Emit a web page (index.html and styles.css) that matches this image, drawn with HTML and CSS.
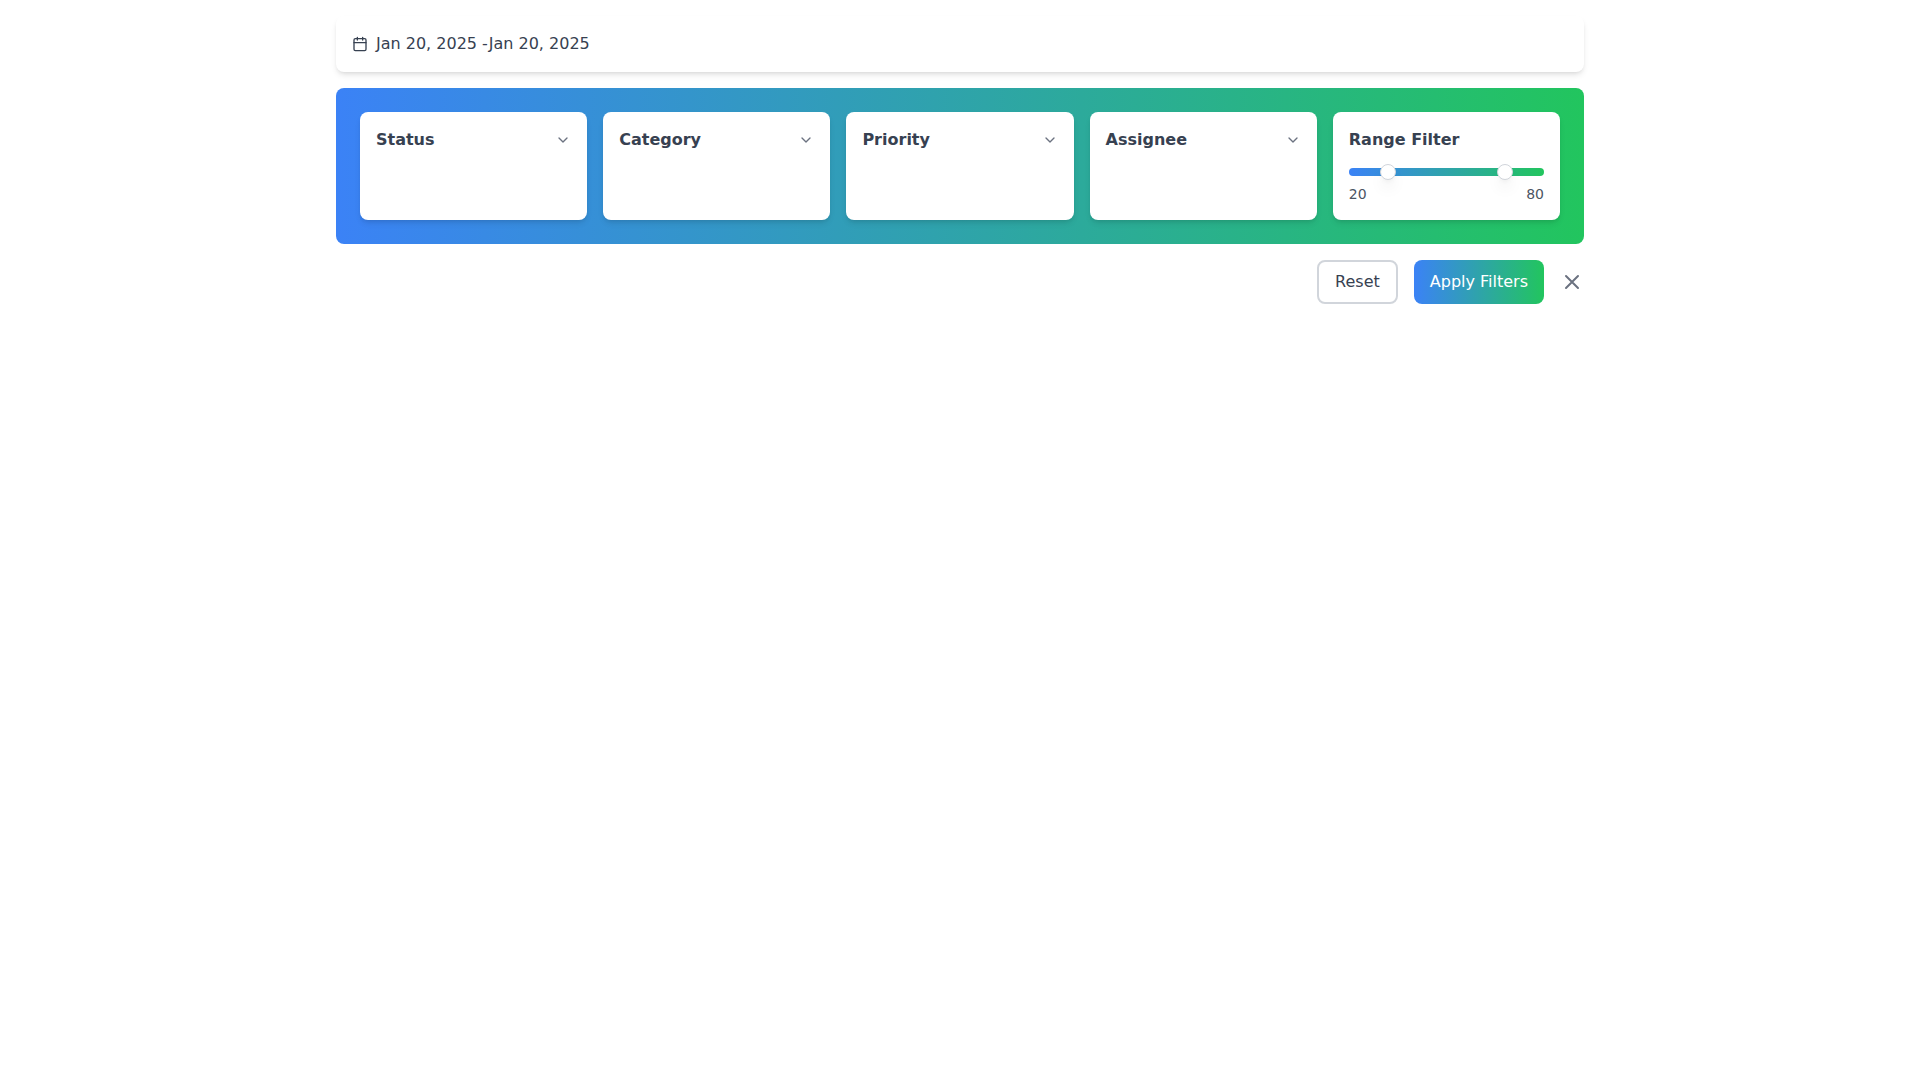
FILE: index.html
```html
<!DOCTYPE html>
<html lang="en">
<head>
<meta charset="utf-8">
<meta name="viewport" content="width=device-width, initial-scale=1">
<title>Filters</title>
<link rel="stylesheet" href="styles.css">
</head>
<body>
<main class="filters">
  <button type="button" class="date-range">
    <svg class="icon-small" viewBox="0 0 24 24" aria-hidden="true"><path d="M8 2v4M16 2v4M3 10h18"/><rect x="3" y="4" width="18" height="18" rx="2"/></svg>
    <span>Jan 20, 2025 -Jan 20, 2025</span>
  </button>
  <div class="panel">
    <section class="card">
      <button type="button" class="card-toggle">Status <svg class="icon-small chevron" viewBox="0 0 24 24" aria-hidden="true"><path d="m6 9 6 6 6-6"/></svg></button>
    </section>
    <section class="card">
      <button type="button" class="card-toggle">Category <svg class="icon-small chevron" viewBox="0 0 24 24" aria-hidden="true"><path d="m6 9 6 6 6-6"/></svg></button>
    </section>
    <section class="card">
      <button type="button" class="card-toggle">Priority <svg class="icon-small chevron" viewBox="0 0 24 24" aria-hidden="true"><path d="m6 9 6 6 6-6"/></svg></button>
    </section>
    <section class="card">
      <button type="button" class="card-toggle">Assignee <svg class="icon-small chevron" viewBox="0 0 24 24" aria-hidden="true"><path d="m6 9 6 6 6-6"/></svg></button>
    </section>
    <section class="card">
      <h2 class="card-title">Range Filter</h2>
      <div class="range">
        <input class="range-input" type="range" min="0" max="100" value="20" aria-label="Minimum">
        <input class="range-input" type="range" min="0" max="100" value="80" aria-label="Maximum">
      </div>
      <div class="range-values"><span>20</span><span>80</span></div>
    </section>
  </div>
  <div class="actions">
    <button type="button" class="button button-reset">Reset</button>
    <button type="button" class="button button-apply">Apply Filters</button>
    <button type="button" class="close" aria-label="Close"><svg class="icon" viewBox="0 0 24 24" aria-hidden="true"><path d="M18 6 6 18M6 6l12 12"/></svg></button>
  </div>
</main>
</body>
</html>
```
FILE: styles.css
```css
*, *::before, *::after { box-sizing: border-box; }

body {
  margin: 0;
  background: #fff;
  color: #374151;
  font: 16px/24px "DejaVu Sans", sans-serif;
}

button {
  margin: 0;
  padding: 0;
  border: 0;
  background: none;
  color: inherit;
  font: inherit;
  cursor: pointer;
}

svg {
  display: block;
  fill: none;
  stroke: currentColor;
  stroke-width: 2;
  stroke-linecap: round;
  stroke-linejoin: round;
}

.icon { width: 24px; height: 24px; }
.icon-small { width: 16px; height: 16px; }

.filters {
  display: flex;
  flex-direction: column;
  gap: 16px;
  max-width: 1280px;
  margin: 0 auto;
  padding: 16px;
}

.date-range {
  display: flex;
  align-items: center;
  gap: 8px;
  padding: 16px;
  border-radius: 8px;
  background: #fff;
  box-shadow: 0 4px 6px -1px rgb(0 0 0 / 0.1), 0 2px 4px -2px rgb(0 0 0 / 0.1);
}

.panel {
  display: grid;
  grid-template-columns: repeat(5, 1fr);
  gap: 16px;
  padding: 24px;
  border-radius: 8px;
  background: linear-gradient(to right, #3b82f6, #22c55e);
}

.card {
  padding: 16px;
  border-radius: 8px;
  background: #fff;
  box-shadow: 0 4px 6px -1px rgb(0 0 0 / 0.1), 0 2px 4px -2px rgb(0 0 0 / 0.1);
}

.card-toggle {
  display: flex;
  align-items: center;
  justify-content: space-between;
  width: 100%;
  font-weight: 700;
}

.chevron { color: #6b7280; }

.card-title {
  margin: 0 0 16px;
  font-size: 16px;
  font-weight: 700;
}

.range {
  display: grid;
  grid-template-rows: 8px;
  border-radius: 4px;
  background: linear-gradient(to right, #3b82f6, #22c55e);
}

/* Both inputs share one track; their travel runs half a thumb past each end. */
.range-input {
  grid-area: 1 / 1;
  align-self: center;
  height: 16px;
  margin: 0 -8px;
  appearance: none;
  background: none;
  pointer-events: none;
}

.range-input::-webkit-slider-thumb {
  appearance: none;
  width: 16px;
  height: 16px;
  border: 1px solid #d1d5db;
  border-radius: 50%;
  background: #fff;
  box-shadow: 0 10px 15px -3px rgb(0 0 0 / 0.1), 0 4px 6px -4px rgb(0 0 0 / 0.1);
  pointer-events: auto;
}

.range-values {
  display: flex;
  justify-content: space-between;
  margin-top: 8px;
  color: #4b5563;
  font-size: 14px;
  line-height: 20px;
}

.actions {
  display: flex;
  align-items: center;
  justify-content: flex-end;
  gap: 16px;
}

.button {
  padding: 10px 16px;
  border-radius: 8px;
}

.button-reset {
  padding: 8px 16px;
  border: 2px solid #d1d5db;
}

.button-apply {
  background: linear-gradient(to right, #3b82f6, #22c55e);
  color: #fff;
}

.close { color: #6b7280; }
```
